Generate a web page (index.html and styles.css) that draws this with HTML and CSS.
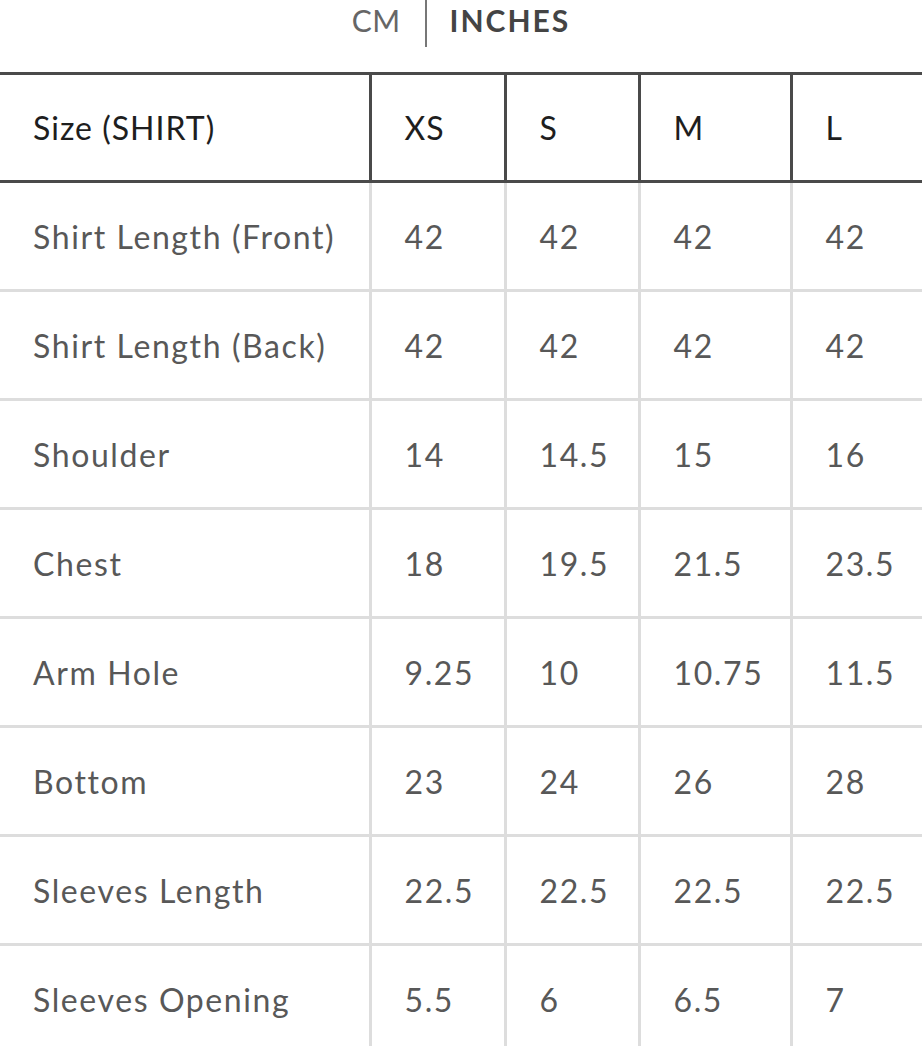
FILE: index.html
```html
<!DOCTYPE html>
<html lang="en">
<head>
<meta charset="utf-8">
<title>Size chart</title>
<link rel="stylesheet" href="styles.css">
</head>
<body>
<div class="page">
  <div class="units">
    <span class="unit">CM</span>
    <span class="sep"></span>
    <span class="unit active">INCHES</span>
  </div>
  <table class="chart">
    <colgroup>
      <col class="c1"><col class="c2"><col class="c3"><col class="c4"><col class="c5">
    </colgroup>
    <thead>
      <tr><th>Size (SHIRT)</th><th>XS</th><th>S</th><th>M</th><th>L</th></tr>
    </thead>
    <tbody>
      <tr><td>Shirt Length (Front)</td><td>42</td><td>42</td><td>42</td><td>42</td></tr>
      <tr><td>Shirt Length (Back)</td><td>42</td><td>42</td><td>42</td><td>42</td></tr>
      <tr><td>Shoulder</td><td>14</td><td>14.5</td><td>15</td><td>16</td></tr>
      <tr><td>Chest</td><td>18</td><td>19.5</td><td>21.5</td><td>23.5</td></tr>
      <tr><td>Arm Hole</td><td>9.25</td><td>10</td><td>10.75</td><td>11.5</td></tr>
      <tr><td>Bottom</td><td>23</td><td>24</td><td>26</td><td>28</td></tr>
      <tr><td>Sleeves Length</td><td>22.5</td><td>22.5</td><td>22.5</td><td>22.5</td></tr>
      <tr><td>Sleeves Opening</td><td>5.5</td><td>6</td><td>6.5</td><td>7</td></tr>
    </tbody>
  </table>
</div>
</body>
</html>
```
FILE: styles.css
```css
html, body {
  margin: 0;
  padding: 0;
  background: #fff;
}
body {
  font-family: "Lato", "Open Sans", sans-serif;
  overflow: hidden;
}
.page {
  width: 922px;
  height: 1046px;
  overflow: hidden;
}
.units {
  height: 72px;
  display: flex;
  justify-content: center;
  align-items: flex-start;
}
.unit {
  font-size: 30px;
  line-height: 40px;
  color: #666;
  letter-spacing: 0.5px;
  margin-right: 24px;
}
.unit.active {
  font-weight: 700;
  color: #444;
  letter-spacing: 2px;
  margin-right: 0;
  margin-left: 23px;
}
.sep {
  width: 2px;
  height: 47px;
  background: #777;
}
.chart {
  width: 1060px;
  border-collapse: collapse;
  table-layout: fixed;
}
.c1 { width: 370px; }
.c2 { width: 135px; }
.c3 { width: 134px; }
.c4 { width: 152px; }
.c5 { width: 269px; }
.chart th, .chart td {
  text-align: left;
  vertical-align: middle;
  padding: 0 0 0 33px;
  white-space: nowrap;
}
.chart th {
  height: 105px;
  font-size: 32px;
  font-weight: 400;
  color: #1e1e1e;
  letter-spacing: 1px;
  border-top: 3px solid #4a4a4a;
  border-bottom: 3px solid #4a4a4a;
  border-left: 3px solid #4a4a4a;
}
.chart td {
  height: 106px;
  font-size: 32px;
  color: #585858;
  letter-spacing: 1.6px;
  border-bottom: 3px solid #ddd;
  border-left: 3px solid #ddd;
}
.chart th:first-child, .chart td:first-child {
  border-left: none;
  padding-left: 33px;
}
```
